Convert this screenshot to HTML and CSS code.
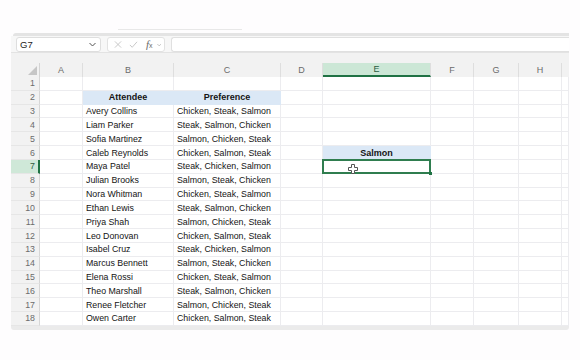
FILE: index.html
```html
<!DOCTYPE html>
<html>
<head>
<meta charset="utf-8">
<link rel="stylesheet" href="styles.css">
</head>
<body>
<div class="top-line"></div>
<div class="panel">
  <div class="band"></div>
  <div class="fbar">
    <div class="namebox"><span>G7</span>
      <svg class="chev" width="7" height="5" viewBox="0 0 7 5"><path d="M0.5 1 L3.5 4 L6.5 1" fill="none" stroke="#555" stroke-width="1"/></svg>
    </div>
    <div class="fxbox">
      <svg width="9" height="9" viewBox="0 0 9 9"><path d="M1 1 L8 8 M8 1 L1 8" stroke="#c2c2c2" stroke-width="1" fill="none"/></svg>
      <svg width="10" height="9" viewBox="0 0 10 9"><path d="M1 5 L3.6 7.6 L9 1.5" stroke="#c2c2c2" stroke-width="1" fill="none"/></svg>
      <span class="fx"><i>f</i><small>x</small></span>
      <svg width="5" height="4" viewBox="0 0 5 4"><path d="M0.5 1 L2.5 3 L4.5 1" fill="none" stroke="#aaa" stroke-width="0.8"/></svg>
    </div>
    <div class="finput"></div>
  </div>
  <div class="sheet">
    <div class="hrow">
      <div class="h corner"><svg width="9" height="9" viewBox="0 0 9 9"><path d="M9 0 L9 9 L0 9 Z" fill="#c6c6c6"/></svg></div>
      <div class="h">A</div><div class="h">B</div><div class="h">C</div><div class="h">D</div><div class="h sel-col">E</div><div class="h">F</div><div class="h">G</div><div class="h">H</div><div class="h last"></div>
    </div>
    <div class="row"><div class="rh">1</div><div class="c"></div><div class="c"></div><div class="c"></div><div class="c"></div><div class="c"></div><div class="c"></div><div class="c"></div><div class="c"></div><div class="c"></div></div>
    <div class="row"><div class="rh">2</div><div class="c"></div><div class="c hd">Attendee</div><div class="c hd">Preference</div><div class="c"></div><div class="c"></div><div class="c"></div><div class="c"></div><div class="c"></div><div class="c"></div></div>
    <div class="row"><div class="rh">3</div><div class="c"></div><div class="c">Avery Collins</div><div class="c">Chicken, Steak, Salmon</div><div class="c"></div><div class="c"></div><div class="c"></div><div class="c"></div><div class="c"></div><div class="c"></div></div>
    <div class="row"><div class="rh">4</div><div class="c"></div><div class="c">Liam Parker</div><div class="c">Steak, Salmon, Chicken</div><div class="c"></div><div class="c"></div><div class="c"></div><div class="c"></div><div class="c"></div><div class="c"></div></div>
    <div class="row"><div class="rh">5</div><div class="c"></div><div class="c">Sofia Martinez</div><div class="c">Salmon, Chicken, Steak</div><div class="c"></div><div class="c"></div><div class="c"></div><div class="c"></div><div class="c"></div><div class="c"></div></div>
    <div class="row"><div class="rh">6</div><div class="c"></div><div class="c">Caleb Reynolds</div><div class="c">Chicken, Salmon, Steak</div><div class="c"></div><div class="c hd">Salmon</div><div class="c"></div><div class="c"></div><div class="c"></div><div class="c"></div></div>
    <div class="row"><div class="rh sel-row">7</div><div class="c"></div><div class="c">Maya Patel</div><div class="c">Steak, Chicken, Salmon</div><div class="c"></div><div class="c active"><svg class="cursor" width="10" height="10" viewBox="0 0 10 10"><path d="M3.5 0.5 H6.5 V3.5 H9.5 V6.5 H6.5 V9.5 H3.5 V6.5 H0.5 V3.5 H3.5 Z" fill="#fff" stroke="#555" stroke-width="1"/></svg><span class="handle"></span></div><div class="c"></div><div class="c"></div><div class="c"></div><div class="c"></div></div>
    <div class="row"><div class="rh">8</div><div class="c"></div><div class="c">Julian Brooks</div><div class="c">Salmon, Steak, Chicken</div><div class="c"></div><div class="c"></div><div class="c"></div><div class="c"></div><div class="c"></div><div class="c"></div></div>
    <div class="row"><div class="rh">9</div><div class="c"></div><div class="c">Nora Whitman</div><div class="c">Chicken, Steak, Salmon</div><div class="c"></div><div class="c"></div><div class="c"></div><div class="c"></div><div class="c"></div><div class="c"></div></div>
    <div class="row"><div class="rh">10</div><div class="c"></div><div class="c">Ethan Lewis</div><div class="c">Steak, Salmon, Chicken</div><div class="c"></div><div class="c"></div><div class="c"></div><div class="c"></div><div class="c"></div><div class="c"></div></div>
    <div class="row"><div class="rh">11</div><div class="c"></div><div class="c">Priya Shah</div><div class="c">Salmon, Chicken, Steak</div><div class="c"></div><div class="c"></div><div class="c"></div><div class="c"></div><div class="c"></div><div class="c"></div></div>
    <div class="row"><div class="rh">12</div><div class="c"></div><div class="c">Leo Donovan</div><div class="c">Chicken, Salmon, Steak</div><div class="c"></div><div class="c"></div><div class="c"></div><div class="c"></div><div class="c"></div><div class="c"></div></div>
    <div class="row"><div class="rh">13</div><div class="c"></div><div class="c">Isabel Cruz</div><div class="c">Steak, Chicken, Salmon</div><div class="c"></div><div class="c"></div><div class="c"></div><div class="c"></div><div class="c"></div><div class="c"></div></div>
    <div class="row"><div class="rh">14</div><div class="c"></div><div class="c">Marcus Bennett</div><div class="c">Salmon, Steak, Chicken</div><div class="c"></div><div class="c"></div><div class="c"></div><div class="c"></div><div class="c"></div><div class="c"></div></div>
    <div class="row"><div class="rh">15</div><div class="c"></div><div class="c">Elena Rossi</div><div class="c">Chicken, Steak, Salmon</div><div class="c"></div><div class="c"></div><div class="c"></div><div class="c"></div><div class="c"></div><div class="c"></div></div>
    <div class="row"><div class="rh">16</div><div class="c"></div><div class="c">Theo Marshall</div><div class="c">Steak, Salmon, Chicken</div><div class="c"></div><div class="c"></div><div class="c"></div><div class="c"></div><div class="c"></div><div class="c"></div></div>
    <div class="row"><div class="rh">17</div><div class="c"></div><div class="c">Renee Fletcher</div><div class="c">Salmon, Chicken, Steak</div><div class="c"></div><div class="c"></div><div class="c"></div><div class="c"></div><div class="c"></div><div class="c"></div></div>
    <div class="row"><div class="rh">18</div><div class="c"></div><div class="c">Owen Carter</div><div class="c">Chicken, Salmon, Steak</div><div class="c"></div><div class="c"></div><div class="c"></div><div class="c"></div><div class="c"></div><div class="c"></div></div>
  </div>
  <div class="hscroll"></div>
</div>
</body>
</html>
```
FILE: styles.css
```css
* { box-sizing: border-box; }
html, body { margin: 0; padding: 0; }
body {
  background: #fefdfe;
  width: 580px;
  height: 360px;
  overflow: hidden;
  font-family: "Liberation Sans", Arial, sans-serif;
  color: #1b1b1b;
}
.top-line {
  margin: 29px 0 0 118px;
  width: 124px;
  height: 1px;
  background: #e8e8e8;
}
.panel {
  margin-left: 11px;
  width: 558px;
  padding-top: 3px;
  border-top-left-radius: 7px;
}
.band {
  height: 3px;
  background: #e4e4e4;
  border-top-left-radius: 3px;
  margin-left: 2px;
}
.fbar {
  height: 16px;
  background: #f7f7f7;
  display: flex;
  align-items: flex-start;
  padding: 1px 0 0 5px;
  gap: 6px;
  overflow: hidden;
}
.namebox {
  width: 85px;
  height: 15px;
  background: #fff;
  border: 1px solid #dedede;
  border-radius: 3px;
  display: flex;
  align-items: center;
  justify-content: space-between;
  padding: 0 4px 0 3px;
  font-size: 9.5px;
  color: #222;
}
.fxbox {
  width: 58px;
  height: 15px;
  background: #fff;
  border: 1px solid #e2e2e2;
  border-radius: 3px;
  display: flex;
  align-items: center;
  padding: 0 3px 0 6px;
  gap: 7px;
}
.fx {
  font-family: "Liberation Serif", serif;
  font-size: 11px;
  color: #6a6a6a;
  line-height: 1;
  margin-left: 1px;
  margin-right: -3px;
}
.fx small { font-size: 7px; font-family: "Liberation Sans", sans-serif; }
.finput {
  flex: 1;
  height: 15px;
  background: #fff;
  border: 1px solid #e0e0e0;
  border-right: none;
  border-radius: 3px 0 0 3px;
}
.sheet {
  border-top: 1px solid #e3e3e3;
  background: #f2f2f2;
  padding-top: 10px;
}
.hrow, .row {
  display: grid;
  grid-template-columns: 29px 43px 91px 107px 42px 108px 43px 45px 43px 7px;
}
.hrow { height: 14px; }
.row { height: 13.83px; background: #fff; }
.h {
  border-right: 1px solid #dedede;
  font-size: 9px;
  color: #6b6b6b;
  display: flex;
  align-items: center;
  justify-content: center;
  background: #f2f2f2;
}
.h.last { border-right: none; }
.corner {
  justify-content: flex-end;
  align-items: flex-end;
  padding: 0 2px 2px 0;
  border-right-color: #d4d4d4;
}
.sel-col {
  background: #cce7d6;
  border-bottom: 2px solid #1f7244;
  color: #2b5c3f;
}
.rh {
  background: #f2f2f2;
  border-right: 1px solid #d6d6d6;
  border-bottom: 1px solid #e6e6e6;
  font-size: 8.8px;
  color: #6b6b6b;
  display: flex;
  align-items: center;
  justify-content: flex-end;
  padding-right: 4px;
}
.sel-row {
  background: #cfe8d8;
  border-right: 2px solid #1f7244;
  color: #2e5a40;
  padding-right: 3px;
}
.c {
  border-right: 1px solid #ececef;
  border-bottom: 1px solid #ececef;
  font-size: 8.8px;
  display: flex;
  align-items: center;
  padding-left: 3px;
  white-space: nowrap;
  overflow: hidden;
  color: #141414;
}
.c.hd {
  background: #dbe8f6;
  border-color: #dbe8f6;
  font-weight: bold;
  justify-content: center;
  padding-left: 0;
  font-size: 9px;
}
.c.active {
  position: relative;
  overflow: visible;
}
.c.active::after {
  content: "";
  position: absolute;
  left: -1px;
  top: -1px;
  right: -1px;
  bottom: -1px;
  border: 2px solid #2f7d4f;
}
.cursor {
  position: absolute;
  left: 25px;
  top: 4px;
  z-index: 2;
}
.handle {
  position: absolute;
  right: -2px;
  bottom: -2px;
  width: 3px;
  height: 3px;
  background: #1f7244;
  z-index: 3;
}
.hscroll {
  height: 4px;
  background: #ebebeb;
  border-radius: 0 0 3px 3px;
}
```
